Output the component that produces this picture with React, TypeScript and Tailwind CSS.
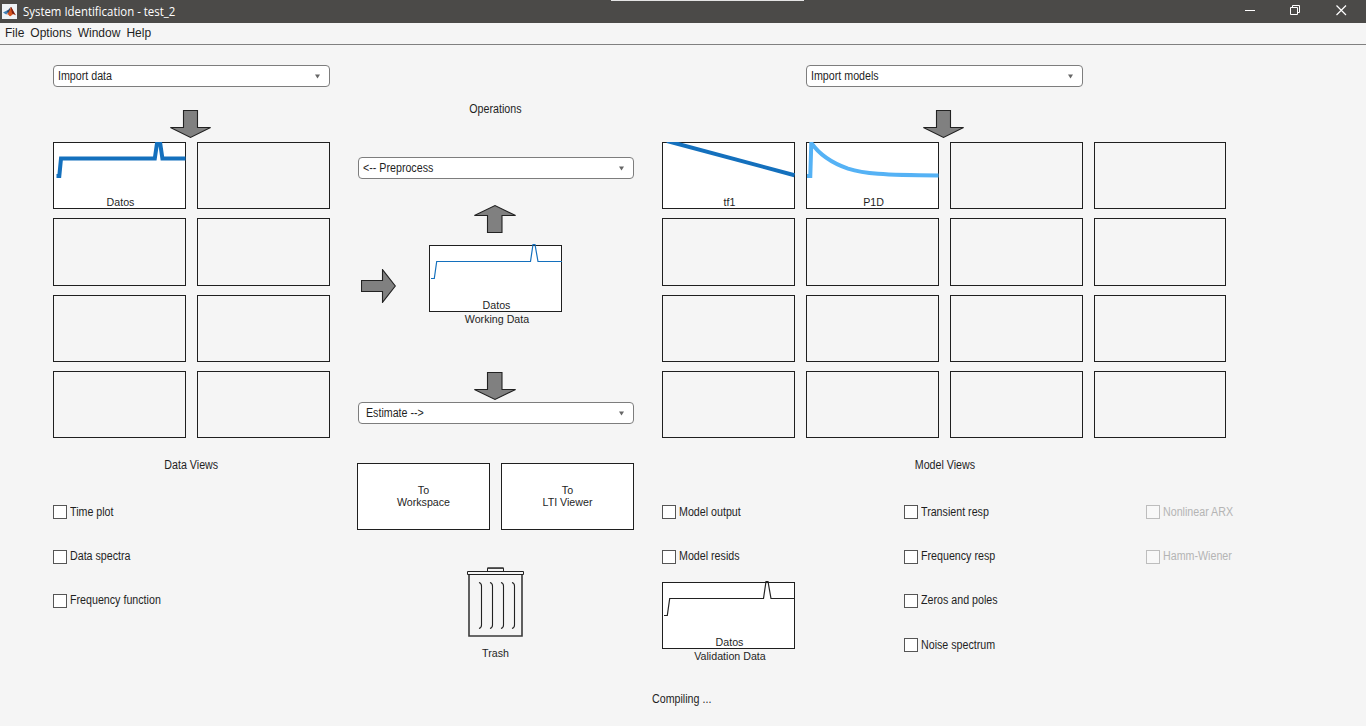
import type { ReactNode } from "react";

const STEP_LINE = "M2 33.5H5.3L7.7 16.5H101.5L104 -0.5H106L109 16.5H133";
const STEP_BOLD = "M3.5 34H6.3L8 16.5H101.8L104.2 0H107L109.4 16.5H132.5";
const RAMP = "M5 -1L132.5 33.2";
const DECAY = "M1 34H4.3L5.3 0.8C13 12 26 21 42 26.6C58 31.6 76 33.2 132.5 33.4";

function Label({ children, className = "origin-left" }: { children: ReactNode; className?: string }) {
  return (
    <span className={`scale-x-[0.89] text-[12px] leading-[14px] whitespace-pre ${className}`}>{children}</span>
  );
}

function Caption({ children, className = "" }: { children: ReactNode; className?: string }) {
  return <span className={`text-[10.67px] leading-[14px] whitespace-pre ${className}`}>{children}</span>;
}

function Select({ label, className = "" }: { label: string; className?: string }) {
  return (
    <button
      className={`flex h-[22px] shrink-0 items-center justify-between rounded-[4px] border border-[#7d7d7d] bg-white pr-[9px] pl-[4px] ${className}`}
    >
      <Label>{label}</Label>
      <svg width="5" height="5" viewBox="0 0 5 5">
        <path d="M0 0.5H5L2.5 4.5Z" fill="#666" />
      </svg>
    </button>
  );
}

function Tile({
  path,
  name,
  color = "#1470bd",
  bold = false,
  className = "",
}: {
  path?: string;
  name?: string;
  color?: string;
  bold?: boolean;
  className?: string;
}) {
  return (
    <div
      className={`relative flex h-[67px] w-[133px] shrink-0 items-end justify-center border border-[#1f1f1f] ${
        path ? "bg-white" : ""
      } ${className}`}
    >
      {path && (
        <svg
          className={`absolute -top-px -left-px ${bold ? "overflow-hidden" : "overflow-visible"}`}
          width="133"
          height="67"
          viewBox="0 0 133 67"
        >
          <path d={path} fill="none" stroke={color} strokeWidth={bold ? 4 : 1.2} />
        </svg>
      )}
      {name && <Caption className="relative -mb-px pl-[2px]">{name}</Caption>}
    </div>
  );
}

function Arrow({ path, width, height, className = "" }: { path: string; width: number; height: number; className?: string }) {
  return (
    <svg className={`shrink-0 ${className}`} width={width} height={height} viewBox={`0 0 ${width} ${height}`}>
      <path d={path} fill="#808080" stroke="#222" strokeWidth="1.1" />
    </svg>
  );
}

const ARROW_IN = "M13.5 0.5H27.5V17.5H40.6L20.5 27.4L0.4 17.5H13.5Z";
const ARROW_DOWN = "M13.5 0.5H28V17.5H41.6L21 27.4L0.4 17.5H13.5Z";
const ARROW_UP = "M13.5 27.5H28V10.5H41.6L21 0.6L0.4 10.5H13.5Z";
const ARROW_RIGHT = "M0.5 11.5H21.5V0.6L34.3 17L21.5 33.4V22.5H0.5Z";

function Check({ label, disabled = false, raised = false }: { label: string; disabled?: boolean; raised?: boolean }) {
  return (
    <label className={`flex h-[14px] items-center gap-[3px] ${disabled ? "text-[#b4b4b4]" : ""}`}>
      <span
        className={`h-[14px] w-[14px] shrink-0 border ${disabled ? "border-[#bdbdbd] bg-[#f8f8f8]" : "border-[#555] bg-white"}`}
      />
      <Label className={raised ? "origin-left pb-[2px]" : "origin-left"}>{label}</Label>
    </label>
  );
}

function TitleBar() {
  return (
    <header className="relative flex h-[23px] items-center bg-[#4b4a48] pl-[2px] text-white">
      <div className="absolute top-0 left-[611px] h-px w-[193px] bg-[#e4e4e4]" />
      <svg width="15" height="15" viewBox="0 0 15 15">
        <rect width="15" height="15" fill="#eef2f6" />
        <path d="M1 8.4L4.4 6.8L6.2 8.6L4.2 10.4Z" fill="#3f7fb5" />
        <path d="M4.4 6.8C6.4 6.6 7 4.6 8.8 3L7.6 8.2L6.2 9.2Z" fill="#27476f" />
        <path d="M8.8 3C10.2 3.4 11.2 8 14 11.2C12 9.8 10.8 10 9.4 11.6C8.6 12.4 7.8 12.4 7.2 11.8C6.4 10.6 5.4 10.2 4.2 10.4C6.8 9.2 7.8 6.2 8.8 3Z" fill="#d4521e" />
        <path d="M8.8 3C10.2 3.4 11.2 8 14 11.2C12 9.8 11 9.6 10.2 9.4C9.6 7.4 9 5 8.8 3Z" fill="#7d1f12" />
      </svg>
      <span className="mt-px ml-[6px] origin-left scale-x-[0.95] font-['Open_Sans','Noto_Sans',sans-serif] text-[12px] leading-[16px] whitespace-pre">
        System Identification - test_2
      </span>
      <svg className="ml-auto" width="121" height="23" viewBox="0 0 121 23" fill="none" stroke="#fff">
        <path d="M0 10.5H10" />
        <path d="M45.5 7.5H52.5V14.5H45.5ZM47.5 7.5V5.5H54.5V12.5H52.5" />
        <path d="M91.5 5.5L101 15M101 5.5L91.5 15" strokeWidth="1.2" />
      </svg>
    </header>
  );
}

function Trash() {
  return (
    <svg width="57" height="70" viewBox="0 0 57 70" fill="none" stroke="#222">
      <path d="M20.5 4.5V1H36.5V4.5" />
      <path d="M20.5 1.2H36.5" strokeWidth="1.6" stroke="#444" />
      <path d="M0.5 4.5H56.5V7.5H0.5Z" />
      <path d="M2 8V69H55V8" strokeWidth="1.6" stroke="#3a3a3a" />
      {[0, 11, 22, 33].map((x) => (
        <path key={x} d={`M${12 + x} 15.5C${13.5 + x} 16 ${14.5 + x} 17 ${14.5 + x} 19V58C${14.5 + x} 60 ${13.5 + x} 61 ${12 + x} 61.5`} strokeWidth="1.1" />
      ))}
    </svg>
  );
}

function ActionTile({ lines }: { lines: string[] }) {
  return (
    <button className="flex h-[67px] w-[133px] flex-col items-center justify-center border border-[#1f1f1f] bg-white pb-[2px]">
      {lines.map((line) => (
        <span key={line} className="text-[10.67px] leading-[12px]">
          {line}
        </span>
      ))}
    </button>
  );
}

function DataPanel() {
  return (
    <section className="flex w-[277px] flex-col items-start pt-[20px]">
      <Select label="Import data" className="w-full" />
      <Arrow path={ARROW_IN} width={41} height={28} className="mt-[23px] ml-[117px]" />
      <div className="mt-[4px] grid grid-cols-[133px_133px] grid-rows-[76px_77px_76px_67px] gap-x-[11px]">
        <Tile path={STEP_BOLD} name="Datos" bold />
        {Array.from({ length: 7 }, (_, i) => (
          <Tile key={i} className={i === 1 || i === 2 ? "min-h-[68px]" : ""} />
        ))}
      </div>
      <Label className="mt-[20px] self-center">Data Views</Label>
      <div className="mt-[33px] grid grid-rows-[45px_44px_44px]">
        <Check label="Time plot" />
        <Check label="Data spectra" raised />
        <Check label="Frequency function" raised />
      </div>
    </section>
  );
}

function OperationsPanel() {
  return (
    <section className="ml-[27px] flex w-[277px] flex-col items-center pt-[57px]">
      <Label className="origin-center">Operations</Label>
      <Select label="<-- Preprocess" className="mt-[41px] ml-px w-[276px]" />
      <Arrow path={ARROW_UP} width={42} height={29} className="mt-[26px] mr-px" />
      <div className="mt-[11px] flex w-full items-start pl-[4px]">
        <Arrow path={ARROW_RIGHT} width={35} height={34} className="mt-[24px]" />
        <div className="ml-[33px] flex flex-col items-center">
          <Tile path={STEP_LINE} name="Datos" />
          <Caption className="pl-[3px]">Working Data</Caption>
        </div>
      </div>
      <Arrow path={ARROW_DOWN} width={42} height={28} className="mt-[46px] mr-px" />
      <Select label=" Estimate -->" className="mt-[2px] ml-px w-[276px]" />
      <div className="mt-[39px] flex gap-[11px]">
        <ActionTile lines={["To", "Workspace"]} />
        <ActionTile lines={["To", "LTI Viewer"]} />
      </div>
      <div className="mt-[37px] flex flex-col items-center">
        <Trash />
        <Caption className="mt-[9px]">Trash</Caption>
      </div>
    </section>
  );
}

function ModelPanel() {
  return (
    <section className="ml-[28px] flex w-[565px] flex-col items-start pt-[20px]">
      <Select label="Import models" className="ml-[144px] w-[277px]" />
      <Arrow path={ARROW_IN} width={41} height={28} className="mt-[23px] ml-[261px]" />
      <div className="mt-[4px] grid grid-cols-[133px_133px_133px_132px] grid-rows-[76px_77px_76px_67px] gap-x-[11px]">
        <Tile path={RAMP} name="tf1" bold />
        <Tile path={DECAY} name="P1D" color="#55b2f5" bold />
        {Array.from({ length: 14 }, (_, i) => (
          <Tile key={i} className={i >= 2 && i <= 5 ? "min-h-[68px] max-w-full" : "max-w-full"} />
        ))}
      </div>
      <Label className="mt-[20px] self-center">Model Views</Label>
      <div className="mt-[33px] grid grid-cols-[242px_242px_auto] items-start">
        <div className="flex flex-col items-start">
          <Check label="Model output" />
          <div className="mt-[31px]">
            <Check label="Model resids" raised />
          </div>
          <div className="mt-[18px] flex flex-col items-center">
            <Tile path={STEP_LINE} name="Datos" color="#222" />
            <Caption className="pl-[3px]">Validation Data</Caption>
          </div>
        </div>
        <div className="grid grid-rows-[45px_44px_44px_14px]">
          <Check label="Transient resp" />
          <Check label="Frequency resp" raised />
          <Check label="Zeros and poles" raised />
          <Check label="Noise spectrum" />
        </div>
        <div className="grid grid-rows-[45px_14px]">
          <Check label="Nonlinear ARX" disabled />
          <Check label="Hamm-Wiener" disabled raised />
        </div>
      </div>
    </section>
  );
}

export default function App() {
  return (
    <div className="flex h-[726px] w-[1366px] flex-col overflow-hidden bg-[#f5f5f5] font-['Liberation_Sans',Arial,sans-serif] text-[#1f1f1f]">
      <TitleBar />
      <nav className="flex h-[22px] items-center gap-[6px] border-b border-[#808080] pb-[2px] pl-[5px] text-[12px] leading-[14px]">
        <span>File</span>
        <span>Options</span>
        <span>Window</span>
        <span>Help</span>
      </nav>
      <main className="flex h-[647px] shrink-0 pl-[53px]">
        <DataPanel />
        <OperationsPanel />
        <ModelPanel />
      </main>
      <footer className="flex pl-[652px]">
        <Label>Compiling ...</Label>
      </footer>
    </div>
  );
}
